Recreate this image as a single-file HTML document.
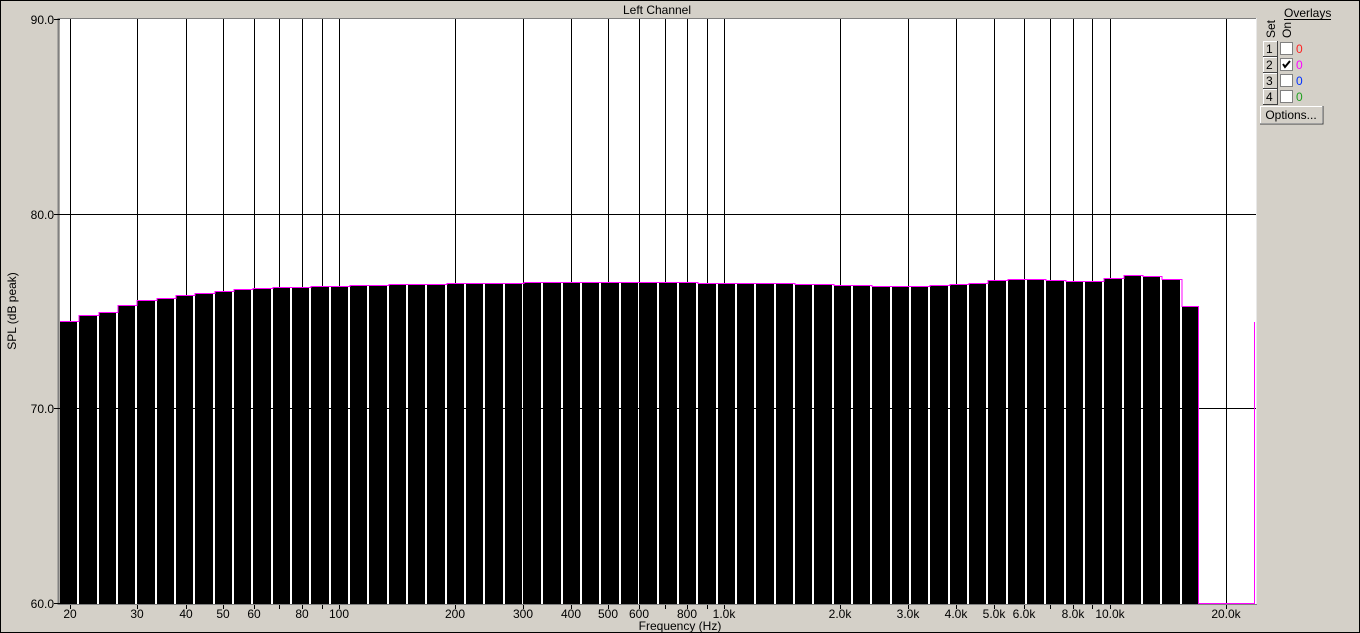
<!DOCTYPE html>
<html><head><meta charset="utf-8"><style>
html,body{margin:0;padding:0;}
body{width:1360px;height:633px;overflow:hidden;background:#d4d0c8;font-family:"Liberation Sans",sans-serif;}
svg{display:block}
text{font-family:"Liberation Sans",sans-serif;font-size:12px;fill:#000}
</style></head><body>
<svg width="1360" height="633" viewBox="0 0 1360 633" xmlns="http://www.w3.org/2000/svg" shape-rendering="crispEdges">
<rect x="0.5" y="0.5" width="1359" height="632" fill="#d4d0c8" stroke="#000"/>
<rect x="60" y="19" width="1196" height="585" fill="#fff"/>
<line x1="58.5" y1="18" x2="58.5" y2="605" stroke="#808080" stroke-width="2"/>
<line x1="58" y1="18.5" x2="1257" y2="18.5" stroke="#808080"/>
<line x1="1256.5" y1="18" x2="1256.5" y2="605" stroke="#e8e8e8"/>
<g stroke="#000" stroke-width="1">
<line x1="60" y1="214.5" x2="1256" y2="214.5"/>
<line x1="60" y1="408.5" x2="1256" y2="408.5"/>
<line x1="70.5" y1="19" x2="70.5" y2="609"/>
<line x1="137.5" y1="19" x2="137.5" y2="609"/>
<line x1="186.5" y1="19" x2="186.5" y2="609"/>
<line x1="223.5" y1="19" x2="223.5" y2="609"/>
<line x1="254.5" y1="19" x2="254.5" y2="609"/>
<line x1="279.5" y1="19" x2="279.5" y2="609"/>
<line x1="302.5" y1="19" x2="302.5" y2="609"/>
<line x1="322.5" y1="19" x2="322.5" y2="609"/>
<line x1="339.5" y1="19" x2="339.5" y2="609"/>
<line x1="455.5" y1="19" x2="455.5" y2="609"/>
<line x1="523.5" y1="19" x2="523.5" y2="609"/>
<line x1="571.5" y1="19" x2="571.5" y2="609"/>
<line x1="608.5" y1="19" x2="608.5" y2="609"/>
<line x1="639.5" y1="19" x2="639.5" y2="609"/>
<line x1="665.5" y1="19" x2="665.5" y2="609"/>
<line x1="687.5" y1="19" x2="687.5" y2="609"/>
<line x1="707.5" y1="19" x2="707.5" y2="609"/>
<line x1="724.5" y1="19" x2="724.5" y2="609"/>
<line x1="840.5" y1="19" x2="840.5" y2="609"/>
<line x1="908.5" y1="19" x2="908.5" y2="609"/>
<line x1="956.5" y1="19" x2="956.5" y2="609"/>
<line x1="994.5" y1="19" x2="994.5" y2="609"/>
<line x1="1024.5" y1="19" x2="1024.5" y2="609"/>
<line x1="1050.5" y1="19" x2="1050.5" y2="609"/>
<line x1="1073.5" y1="19" x2="1073.5" y2="609"/>
<line x1="1092.5" y1="19" x2="1092.5" y2="609"/>
<line x1="1110.5" y1="19" x2="1110.5" y2="609"/>
<line x1="1226.5" y1="19" x2="1226.5" y2="609"/>
<line x1="54" y1="19.5" x2="60" y2="19.5"/>
<line x1="54" y1="214.5" x2="60" y2="214.5"/>
<line x1="54" y1="408.5" x2="60" y2="408.5"/>
<line x1="54" y1="603.5" x2="60" y2="603.5"/>
</g>
<line x1="58" y1="604.5" x2="1257" y2="604.5" stroke="#808080"/>
<g fill="#000">
<rect x="60" y="321" width="17" height="283"/>
<rect x="79" y="315" width="18" height="289"/>
<rect x="99" y="312" width="17" height="292"/>
<rect x="118" y="305" width="17" height="299"/>
<rect x="137" y="300" width="18" height="304"/>
<rect x="157" y="298" width="17" height="306"/>
<rect x="176" y="295" width="17" height="309"/>
<rect x="195" y="293" width="18" height="311"/>
<rect x="215" y="291" width="17" height="313"/>
<rect x="234" y="289" width="17" height="315"/>
<rect x="253" y="288" width="18" height="316"/>
<rect x="273" y="287" width="17" height="317"/>
<rect x="292" y="287" width="17" height="317"/>
<rect x="311" y="286" width="18" height="318"/>
<rect x="331" y="286" width="17" height="318"/>
<rect x="350" y="285" width="17" height="319"/>
<rect x="369" y="285" width="18" height="319"/>
<rect x="389" y="284" width="17" height="320"/>
<rect x="408" y="284" width="17" height="320"/>
<rect x="427" y="284" width="18" height="320"/>
<rect x="447" y="283" width="17" height="321"/>
<rect x="466" y="283" width="17" height="321"/>
<rect x="485" y="283" width="18" height="321"/>
<rect x="505" y="283" width="17" height="321"/>
<rect x="524" y="282" width="17" height="322"/>
<rect x="543" y="282" width="18" height="322"/>
<rect x="563" y="282" width="17" height="322"/>
<rect x="582" y="282" width="17" height="322"/>
<rect x="601" y="282" width="18" height="322"/>
<rect x="621" y="282" width="17" height="322"/>
<rect x="640" y="282" width="17" height="322"/>
<rect x="659" y="282" width="18" height="322"/>
<rect x="679" y="282" width="17" height="322"/>
<rect x="698" y="283" width="18" height="321"/>
<rect x="718" y="283" width="17" height="321"/>
<rect x="737" y="283" width="17" height="321"/>
<rect x="756" y="283" width="18" height="321"/>
<rect x="776" y="283" width="17" height="321"/>
<rect x="795" y="284" width="17" height="320"/>
<rect x="814" y="284" width="18" height="320"/>
<rect x="834" y="285" width="17" height="319"/>
<rect x="853" y="285" width="17" height="319"/>
<rect x="872" y="286" width="18" height="318"/>
<rect x="892" y="286" width="17" height="318"/>
<rect x="911" y="286" width="17" height="318"/>
<rect x="930" y="285" width="18" height="319"/>
<rect x="950" y="284" width="17" height="320"/>
<rect x="969" y="283" width="17" height="321"/>
<rect x="988" y="280" width="18" height="324"/>
<rect x="1008" y="279" width="17" height="325"/>
<rect x="1027" y="279" width="17" height="325"/>
<rect x="1046" y="280" width="18" height="324"/>
<rect x="1066" y="281" width="17" height="323"/>
<rect x="1085" y="281" width="17" height="323"/>
<rect x="1104" y="278" width="18" height="326"/>
<rect x="1124" y="275" width="17" height="329"/>
<rect x="1143" y="276" width="17" height="328"/>
<rect x="1162" y="279" width="18" height="325"/>
<rect x="1182" y="306" width="16" height="298"/>
</g>
<path fill="none" stroke="#ff00ff" stroke-width="1" d="M60,321.5 H79 V315.5 H99 V312.5 H118 V305.5 H137 V300.5 H157 V298.5 H176 V295.5 H195 V293.5 H215 V291.5 H234 V289.5 H253 V288.5 H273 V287.5 H311 V286.5 H350 V285.5 H389 V284.5 H447 V283.5 H524 V282.5 H698 V283.5 H795 V284.5 H834 V285.5 H872 V286.5 H930 V285.5 H950 V284.5 H969 V283.5 H988 V280.5 H1008 V279.5 H1046 V280.5 H1066 V281.5 H1104 V278.5 H1124 V275.5 H1143 V276.5 H1162 V279.5 H1182 V306.5 H1198.5"/>
<rect x="1198" y="306" width="1" height="298" fill="#ff00ff"/>
<rect x="1198" y="603" width="57" height="1" fill="#ff00ff"/>
<rect x="1254" y="322" width="1" height="282" fill="#ff00ff"/>
<text x="657" y="14" text-anchor="middle">Left Channel</text>
<g text-anchor="end">
<text x="54" y="24">90.0</text>
<text x="54" y="219">80.0</text>
<text x="54" y="413">70.0</text>
<text x="54" y="608">60.0</text>
</g>
<text transform="translate(16,311) rotate(-90)" text-anchor="middle">SPL (dB peak)</text>
<g text-anchor="middle">
<text x="70" y="618">20</text>
<text x="137" y="618">30</text>
<text x="186" y="618">40</text>
<text x="223" y="618">50</text>
<text x="254" y="618">60</text>
<text x="302" y="618">80</text>
<text x="339" y="618">100</text>
<text x="455" y="618">200</text>
<text x="523" y="618">300</text>
<text x="571" y="618">400</text>
<text x="608" y="618">500</text>
<text x="639" y="618">600</text>
<text x="687" y="618">800</text>
<text x="724" y="618">1.0k</text>
<text x="840" y="618">2.0k</text>
<text x="908" y="618">3.0k</text>
<text x="956" y="618">4.0k</text>
<text x="994" y="618">5.0k</text>
<text x="1024" y="618">6.0k</text>
<text x="1073" y="618">8.0k</text>
<text x="1110" y="618">10.0k</text>
<text x="1226" y="618">20.0k</text>
<text x="680" y="630">Frequency (Hz)</text>
</g>
<text x="1284" y="17">Overlays</text>
<line x1="1284" y1="19.5" x2="1331" y2="19.5" stroke="#000"/>
<text transform="translate(1275,38) rotate(-90)">Set</text>
<text transform="translate(1291,38) rotate(-90)">On</text>
<rect x="1263.5" y="41.5" width="14" height="15" fill="#d4d0c8" stroke="#fff"/>
<path d="M1277.5,41 V56.5 H1263" fill="none" stroke="#404040"/>
<text x="1266" y="53">1</text>
<rect x="1263.5" y="57.5" width="14" height="15" fill="#d4d0c8" stroke="#fff"/>
<path d="M1277.5,57 V72.5 H1263" fill="none" stroke="#404040"/>
<text x="1266" y="69">2</text>
<rect x="1263.5" y="73.5" width="14" height="15" fill="#d4d0c8" stroke="#fff"/>
<path d="M1277.5,73 V88.5 H1263" fill="none" stroke="#404040"/>
<text x="1266" y="85">3</text>
<rect x="1263.5" y="89.5" width="14" height="15" fill="#d4d0c8" stroke="#fff"/>
<path d="M1277.5,89 V104.5 H1263" fill="none" stroke="#404040"/>
<text x="1266" y="101">4</text>
<g fill="#fff" stroke="#808080">
<rect x="1280.5" y="42.5" width="12" height="12"/>
<rect x="1280.5" y="58.5" width="12" height="12"/>
<rect x="1280.5" y="74.5" width="12" height="12"/>
<rect x="1280.5" y="90.5" width="12" height="12"/>
</g>
<path d="M1283,64 L1285,67 L1290,61" fill="none" stroke="#000" stroke-width="2" shape-rendering="auto"/>
<text x="1296" y="53" style="fill:#ff2020">0</text>
<text x="1296" y="69" style="fill:#ff00ff">0</text>
<text x="1296" y="85" style="fill:#0030ff">0</text>
<text x="1296" y="101" style="fill:#20a020">0</text>
<rect x="1260.5" y="106.5" width="62" height="17" fill="#d4d0c8" stroke="#fff"/>
<path d="M1323,106 V124 H1260" fill="none" stroke="#404040"/>
<text x="1291" y="119" text-anchor="middle">Options...</text>
</svg>
</body></html>
